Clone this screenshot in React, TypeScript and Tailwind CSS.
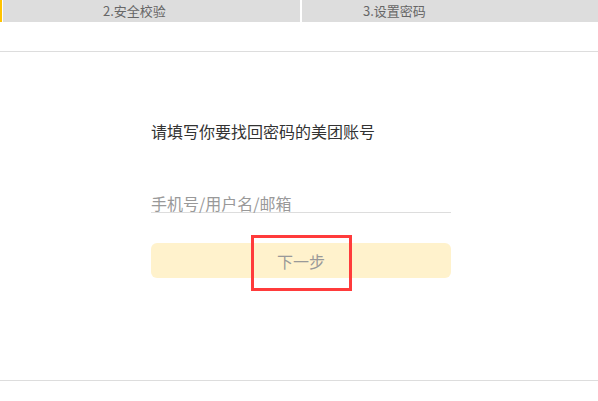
export default function App() {
  const font = { fontFamily: '"Microsoft YaHei", "Noto Sans CJK SC", "Noto Sans", sans-serif' };
  return (
    <div className="w-[598px] h-[401px] bg-white overflow-hidden" style={font}>
      <div className="flex h-[22px] gap-[1px]">
        <div className="w-[2px] bg-[#ffc300]" />
        <div className="w-[297px] bg-[#dddddd] pl-[100px] text-[13px] leading-[22px] text-[#666]">2.安全校验</div>
        <div className="w-[2px] bg-white -ml-[1px] -mr-[1px]" />
        <div className="flex-1 bg-[#dddddd] pl-[61px] text-[13px] leading-[22px] text-[#666]">3.设置密码</div>
      </div>
      <div className="h-[30px] border-b border-[#dddddd]" />
      <div className="h-[329px] border-b border-[#dddddd] pl-[151px] pt-[69px]">
        <div className="text-[16px] leading-[20px] text-[#333]">请填写你要找回密码的美团账号</div>
        <div className="mt-[53px] w-[300px] border-b border-[#dddddd] h-[19px] text-[16px] leading-[18px] text-[#999]">手机号/用户名/邮箱</div>
        <div className="relative mt-[30px] w-[300px] h-[35px] rounded-[6px] bg-[#fff2cc] flex items-center justify-center text-[16px] text-[#999]">
          下一步
          <div className="absolute left-[100px] top-[-8px] w-[101px] h-[56px] border-[3px] border-[#ff3b3b]" />
        </div>
      </div>
    </div>
  );
}
